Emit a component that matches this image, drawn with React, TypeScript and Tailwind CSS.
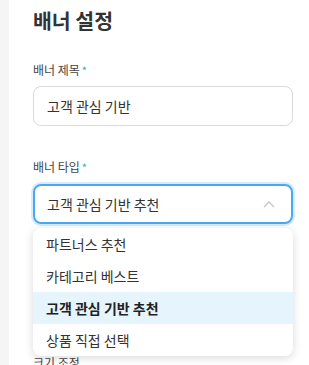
import React from "react";

const items = ["파트너스 추천", "카테고리 베스트", "고객 관심 기반 추천", "상품 직접 선택"];

export default function App() {
  return (
    <div
      className="flex w-[309px] h-[365px] overflow-hidden bg-[#f5f5f5]"
      style={{ fontFamily: '"Noto Sans CJK KR", "Noto Sans", sans-serif' }}
    >
      <div className="w-[9px] shrink-0 bg-[#f5f5f5]" />
      <div className="flex-1 bg-white px-[24px] pt-[4px]">
        <h1 className="text-[20.5px] font-bold leading-[32px] text-[#333]">배너 설정</h1>
        <div className="mt-[25px] flex items-start text-[12px] leading-[18px] text-[#444]">
          배너 제목<span className="ml-[2px] text-[#22b5a0] text-[11px]">*</span>
        </div>
        <div className="mt-[7px] flex h-[40px] w-[260px] items-center rounded-[8px] border border-[#d9d9d9] px-[13px] text-[14px] text-[#333]">
          고객 관심 기반
        </div>
        <div className="mt-[32px] flex items-start text-[12px] leading-[18px] text-[#444]">
          배너 타입<span className="ml-[2px] text-[#22b5a0] text-[11px]">*</span>
        </div>
        <div className="relative mt-[8px]">
          <div className="flex h-[40px] w-[260px] items-center justify-between rounded-[8px] border-2 border-[#4aa8f0] px-[12px] text-[14px] text-[#333] shadow-[0_0_0_2px_#d6ebfc]">
            <span>고객 관심 기반 추천</span>
            <svg width="12" height="8" viewBox="0 0 12 8" className="mr-[4px]">
              <path d="M1 7 L6 2 L11 7" fill="none" stroke="#c4c4c4" strokeWidth="1.3" />
            </svg>
          </div>
          <div className="absolute left-0 top-[44px] z-10 w-[260px] overflow-hidden rounded-[8px] bg-white py-0 shadow-[0_2px_10px_rgba(0,0,0,0.15)]">
            {items.map((it, i) => (
              <div
                key={it}
                className={
                  "flex h-[32px] items-center px-[13px] text-[14px] " +
                  (i === 2 ? "bg-[#e6f5fd] font-bold text-[#222]" : "text-[#333]")
                }
              >
                {it}
              </div>
            ))}
          </div>
          <div className="mt-[130px] text-[12px] leading-[18px] text-[#444]">크기 조정</div>
        </div>
      </div>
    </div>
  );
}
